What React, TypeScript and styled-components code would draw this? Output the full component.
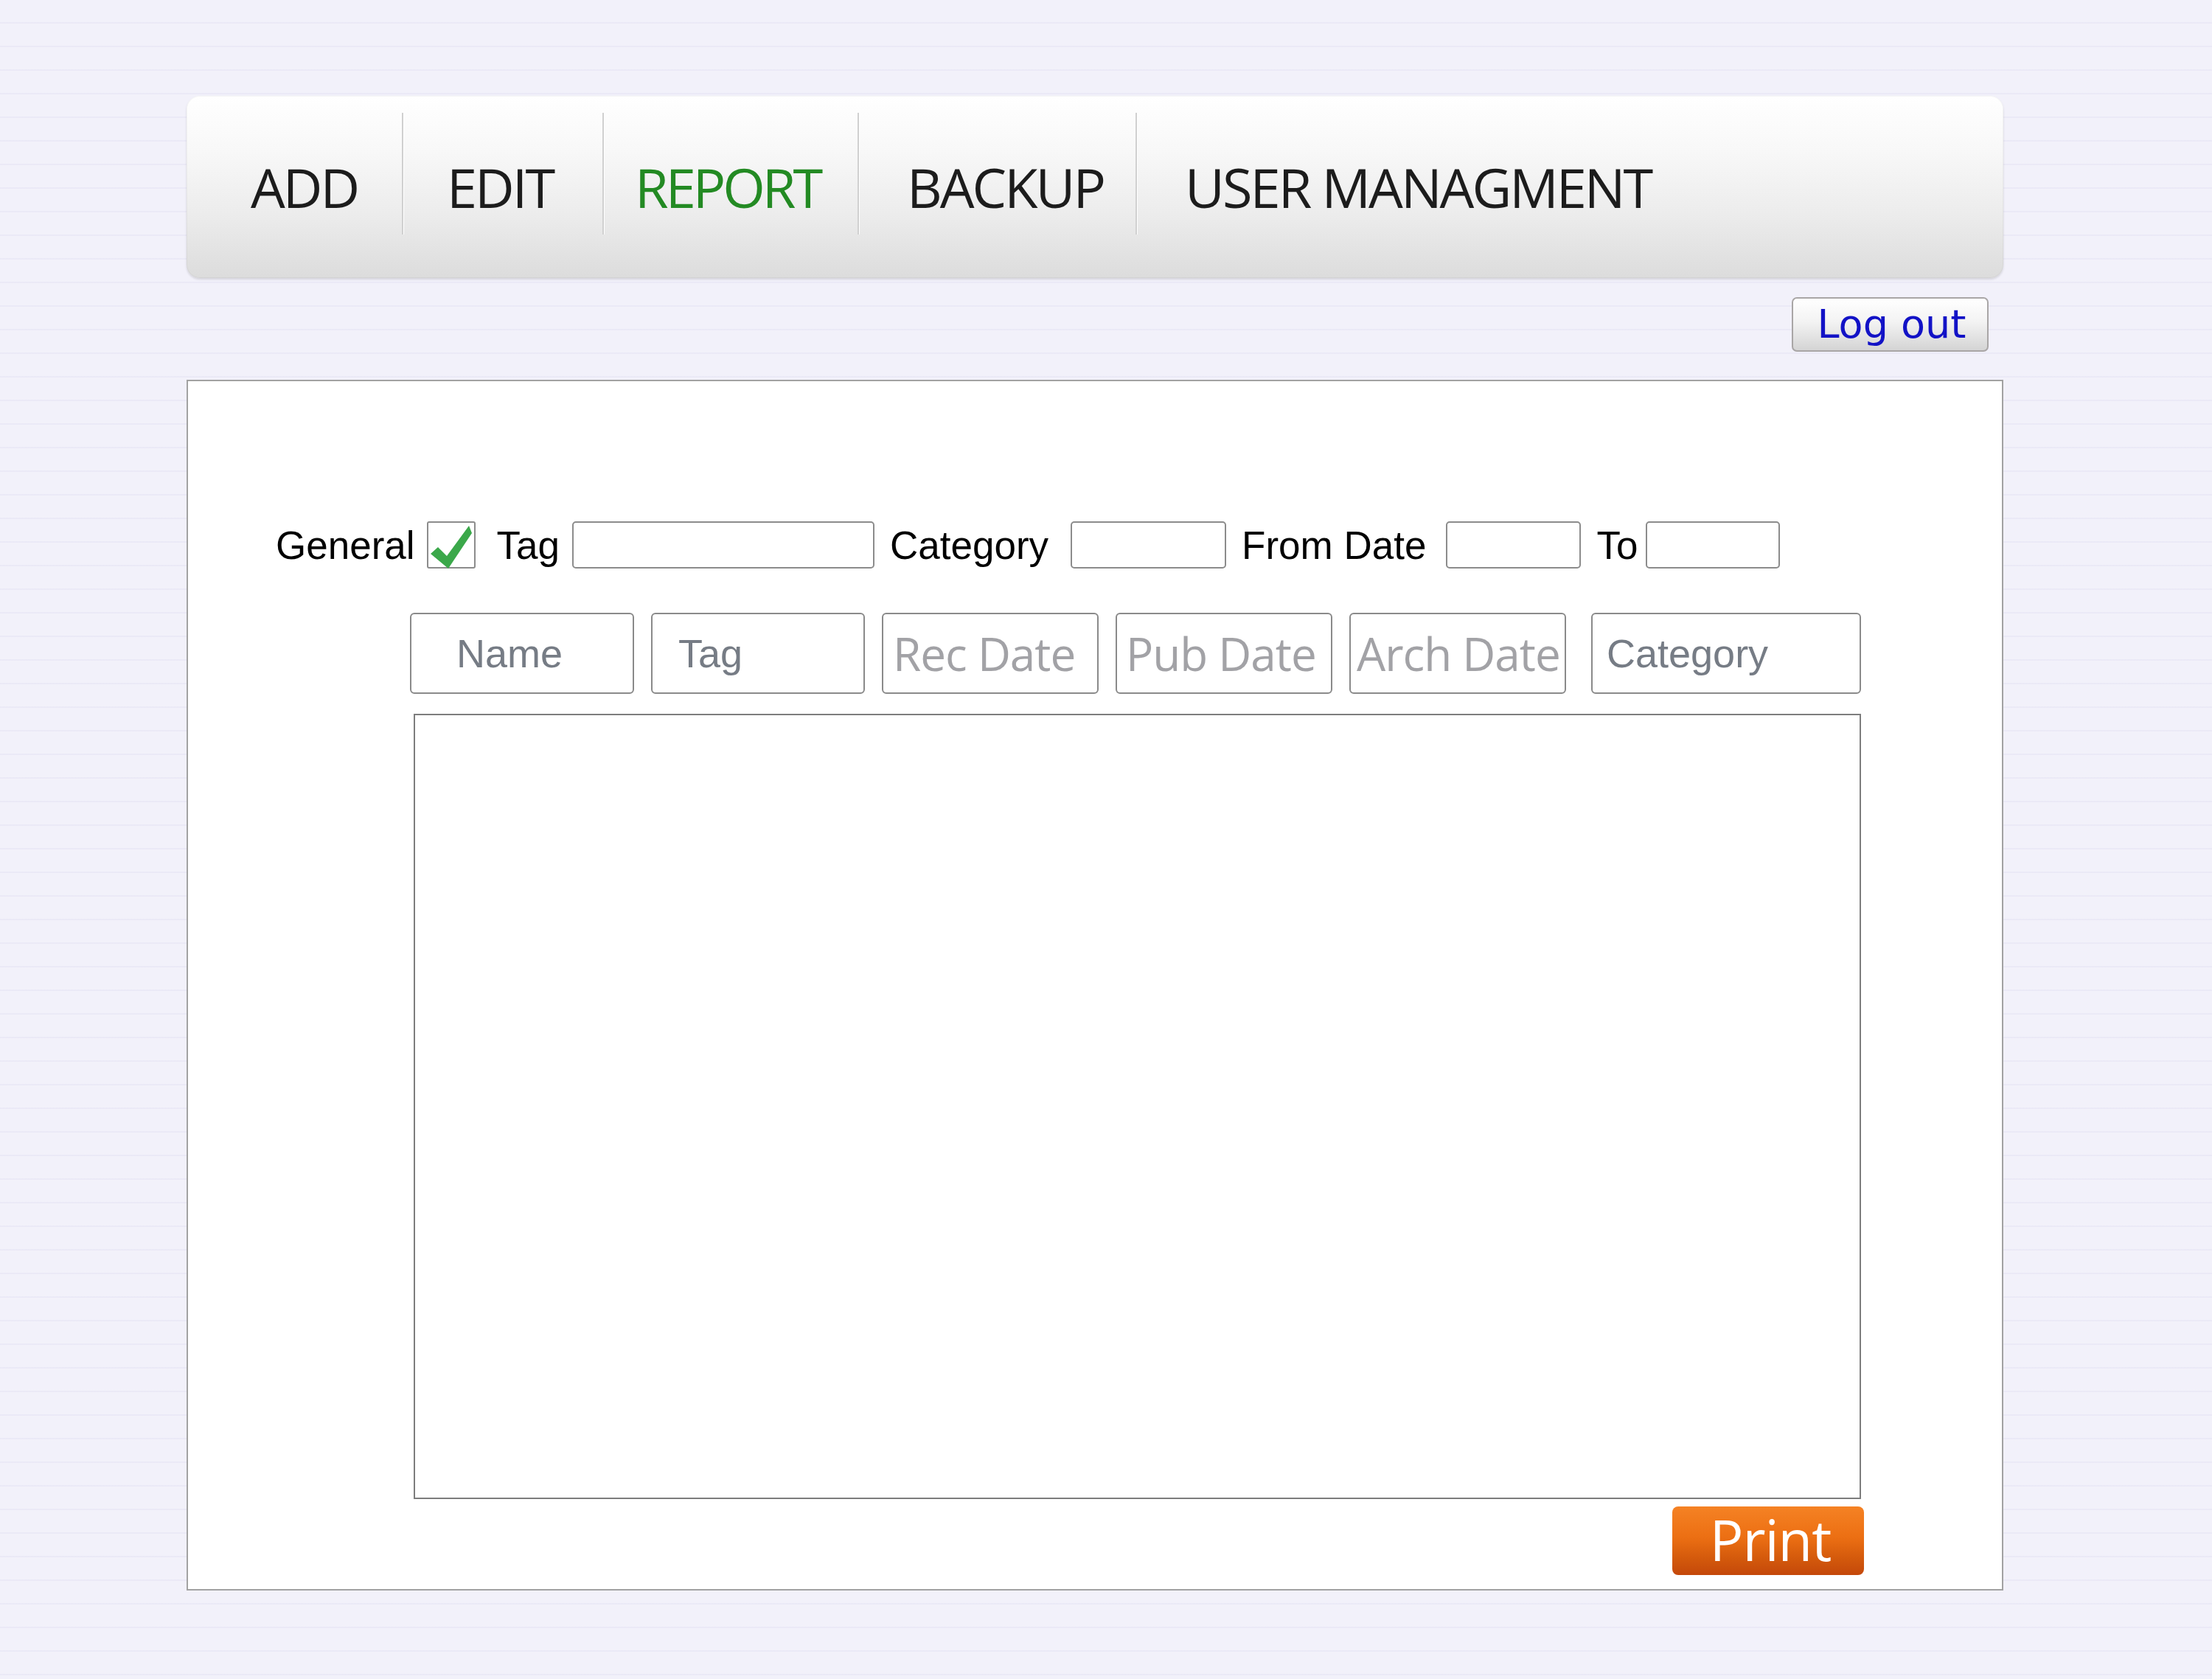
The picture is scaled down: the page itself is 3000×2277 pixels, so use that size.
import React from "react";
import styled, { createGlobalStyle } from "styled-components";

const GlobalStyle = createGlobalStyle`
  body {
    margin: 0;
    background-color: #f2f1fa;
    background-image: repeating-linear-gradient(
      180deg,
      transparent 0px,
      transparent 30px,
      rgba(226, 224, 242, 0.45) 30px,
      rgba(226, 224, 242, 0.45) 32px
    );
    font-family: "Liberation Sans", Arial, sans-serif;
  }
`;

const Page = styled.div`
  width: 2464px;
  padding: 130px 0 120px 253px;
`;

const NavBar = styled.nav`
  display: flex;
  align-items: center;
  height: 247px;
  box-sizing: border-box;
  border-radius: 18px;
  background: linear-gradient(180deg, #ffffff 0%, #f8f8f8 30%, #ececec 65%, #dcdcdc 100%);
  box-shadow: 0 2px 3px rgba(0, 0, 0, 0.12), inset 0 0 0 1px rgba(0, 0, 0, 0.04);
`;

const NavItem = styled.a<{ $width?: number; $indent: number; $active?: boolean }>`
  box-sizing: border-box;
  ${(p) => (p.$width ? `width: ${p.$width}px;` : "flex: 1;")}
  padding-left: ${(p) => p.$indent}px;
  font-family: "Open Sans", sans-serif;
  font-size: 74px;
  letter-spacing: ${(p) => (p.$active ? -4 : -3)}px;
  line-height: 1;
  color: ${(p) => (p.$active ? "#238a23" : "#1c1c1c")};
  text-decoration: none;
  white-space: nowrap;
`;

const NavDivider = styled.span`
  align-self: flex-start;
  flex: none;
  width: 2px;
  height: 165px;
  margin-top: 23px;
  background: #d0d0d0;
  box-shadow: 1px 0 0 #ffffff;
`;

const LogoutRow = styled.div`
  display: flex;
  justify-content: flex-end;
  height: 138px;
  box-sizing: border-box;
  padding: 26px 20px 0 0;
`;

const LogoutButton = styled.button`
  width: 267px;
  height: 74px;
  padding: 0 0 0 4px;
  border: 2px solid #a9a6a6;
  border-radius: 7px;
  background: linear-gradient(180deg, #ffffff 0%, #f3f3f3 45%, #d4d4d4 100%);
  font-family: "DejaVu Sans", Verdana, sans-serif;
  font-size: 54px;
  line-height: 1;
  color: #1212c6;
`;

const Panel = styled.section`
  background: #ffffff;
  border: 2px solid #a2a2a2;
  padding: 190px 0 19px 0;
`;

const FilterRow = styled.div`
  display: flex;
  align-items: center;
  height: 64px;
  margin-left: 119px;
`;

const Label = styled.span<{ $gap?: number }>`
  font-size: 53px;
  line-height: 1;
  color: #000000;
  margin-right: ${(p) => p.$gap ?? 15}px;
  white-space: nowrap;
`;

const TextBox = styled.input<{ $width: number }>`
  box-sizing: border-box;
  width: ${(p) => p.$width}px;
  height: 64px;
  margin-right: 21px;
  border: 2px solid #8c8c8c;
  border-radius: 5px;
  background: #ffffff;
  padding: 0;
`;

const CheckBox = styled.span`
  display: inline-flex;
  box-sizing: border-box;
  width: 66px;
  height: 64px;
  margin-right: 29px;
  border: 2px solid #8c8c8c;
  border-radius: 3px;
  background: #ffffff;
`;

const ResultArea = styled.div`
  width: 1968px;
  margin: 60px 0 0 301px;
`;

const HeaderRow = styled.div`
  display: flex;
  gap: 23px;
  height: 110px;

  & > :last-child {
    margin-left: auto;
  }
`;

const HeaderCell = styled.div<{ $width: number; $indent: number; $muted?: boolean }>`
  display: flex;
  align-items: center;
  box-sizing: border-box;
  width: ${(p) => p.$width}px;
  padding-left: ${(p) => p.$indent}px;
  border: 2px solid #8a8a8a;
  border-radius: 6px;
  font-family: ${(p) => (p.$muted ? '"Open Sans", sans-serif' : '"Liberation Sans", Arial, sans-serif')};
  font-size: ${(p) => (p.$muted ? 62 : 54)}px;
  letter-spacing: ${(p) => (p.$muted ? -1 : 0)}px;
  color: ${(p) => (p.$muted ? "#a2a2a6" : "#767c85")};
  white-space: nowrap;
  overflow: hidden;
`;

const ResultTable = styled.div`
  height: 1065px;
  margin: 27px 0 0 5px;
  box-sizing: border-box;
  border: 2px solid #7d7d7d;
  background: #ffffff;
`;

const ActionRow = styled.div`
  display: flex;
  justify-content: flex-end;
  margin: 10px -4px 0 0;
`;

const PrintButton = styled.button`
  width: 260px;
  height: 93px;
  padding: 0 0 4px 6px;
  border: 0;
  border-radius: 8px;
  background: linear-gradient(180deg, #f58224 0%, #ec6f13 45%, #d45a0c 75%, #c4480a 100%);
  font-family: "Open Sans", sans-serif;
  font-size: 76px;
  letter-spacing: -1px;
  line-height: 1;
  color: #ffffff;
`;

const CheckMark = () => (
  <svg width="62" height="62" viewBox="0 0 62 62" style={{ marginTop: 1 }}>
    <path d="M3 41 L13 32 L25 44 L55 3 L59 13 L27 61 Z" fill="#3ba84a" />
  </svg>
);

const navItems = [
  { label: "ADD", width: 292, indent: 87 },
  { label: "EDIT", width: 270, indent: 59 },
  { label: "REPORT", width: 344, indent: 42, active: true },
  { label: "BACKUP", width: 375, indent: 65 },
  { label: "USER MANAGMENT", indent: 65 },
];

const headers = [
  { label: "Name", width: 304, indent: 61 },
  { label: "Tag", width: 290, indent: 35 },
  { label: "Rec Date", width: 294, indent: 13, muted: true },
  { label: "Pub Date", width: 294, indent: 12, muted: true },
  { label: "Arch Date", width: 294, indent: 8, muted: true },
  { label: "Category", width: 366, indent: 19 },
];

export default function App() {
  return (
    <>
      <GlobalStyle />
      <Page>
        <NavBar>
          {navItems.map((item, i) => (
            <React.Fragment key={item.label}>
              {i > 0 && <NavDivider />}
              <NavItem $width={item.width} $indent={item.indent} $active={item.active}>
                {item.label}
              </NavItem>
            </React.Fragment>
          ))}
        </NavBar>

        <LogoutRow>
          <LogoutButton>Log out</LogoutButton>
        </LogoutRow>

        <Panel>
          <FilterRow>
            <Label $gap={16}>General</Label>
            <CheckBox>
              <CheckMark />
            </CheckBox>
            <Label $gap={17}>Tag</Label>
            <TextBox $width={410} />
            <Label $gap={30}>Category</Label>
            <TextBox $width={211} />
            <Label $gap={27}>From Date</Label>
            <TextBox $width={183} />
            <Label $gap={11}>To</Label>
            <TextBox $width={182} />
          </FilterRow>

          <ResultArea>
            <HeaderRow>
              {headers.map((h) => (
                <HeaderCell key={h.label} $width={h.width} $indent={h.indent} $muted={h.muted}>
                  {h.label}
                </HeaderCell>
              ))}
            </HeaderRow>
            <ResultTable />
            <ActionRow>
              <PrintButton>Print</PrintButton>
            </ActionRow>
          </ResultArea>
        </Panel>
      </Page>
    </>
  );
}
